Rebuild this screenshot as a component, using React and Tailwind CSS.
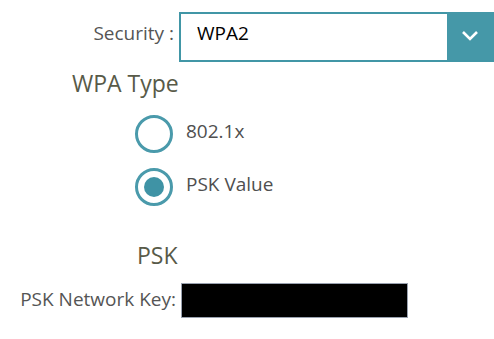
import React from "react";

const Radio = ({ checked, label }) => (
    <label className="flex items-center h-[38px]">
        <span className="w-[38px] h-[38px] rounded-full border-[3px] border-[#4a9aab] flex items-center justify-center">
            {checked && <span className="w-[20px] h-[20px] rounded-full bg-[#3f93a5]" />}
        </span>
        <span className="ml-[13px] pb-[5px] text-[19px] text-[#4f4f4f]">{label}</span>
    </label>
);

export default function App() {
    return (
        <div className="w-[494px] h-[339px] overflow-hidden bg-white font-['Open_Sans',sans-serif]">
            <div className="flex items-center mt-[12px] h-[50px]">
                <span className="w-[174px] shrink-0 pb-[7px] text-right text-[19px] text-[#555555]">Security :</span>
                <div className="ml-[5px] w-[320px] h-[50px] shrink-0 flex border-2 border-[#4196a6]">
                    <div className="w-[266px] flex items-center pl-[16px] pb-[7px] text-[19px] text-black">WPA2</div>
                    <div className="w-[50px] -mt-[2px] h-[48px] bg-[#4598a8] flex items-center justify-center">
                        <svg width="18" height="12" viewBox="0 0 18 12" className="-ml-[4px]">
                            <path d="M2 2 L9 9 L16 2" fill="none" stroke="white" strokeWidth="2.6" />
                        </svg>
                    </div>
                </div>
            </div>

            <h2 className="mt-[7px] pl-[72px] text-[23px] leading-[28px] text-[#585a48]">WPA Type</h2>

            <div className="pl-[135px] mt-[18px] flex flex-col gap-[15px]">
                <Radio label="802.1x" />
                <Radio checked label="PSK Value" />
            </div>

            <h2 className="mt-[34px] pl-[137px] text-[23px] leading-[30px] text-[#585a48]">PSK</h2>

            <div className="flex items-center mt-[13px]">
                <span className="w-[176px] shrink-0 pb-[3px] text-right text-[19px] text-[#555555]">PSK Network Key:</span>
                <div className="ml-[5px] w-[227px] h-[35px] bg-black border border-gray-400" />
            </div>
        </div>
    );
}
